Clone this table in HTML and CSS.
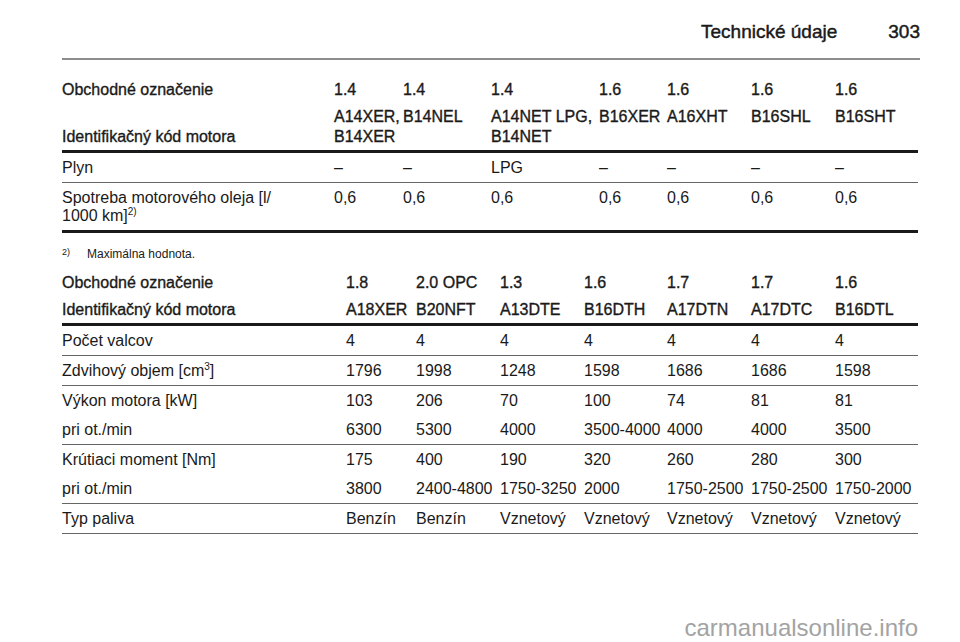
FILE: index.html
```html
<!DOCTYPE html>
<html lang="sk">
<head>
<meta charset="utf-8">
<title>Technické údaje 303</title>
<link rel="stylesheet" href="styles.css">
</head>
<body>
<div class="page">
  <header class="running-head">
    <span class="section">Technické údaje</span>
    <span class="pageno">303</span>
  </header>

  <table class="spec">
    <colgroup>
      <col class="w272"><col class="w69"><col class="w88"><col class="w108"><col class="w68"><col class="w84"><col class="w84"><col class="w83">
    </colgroup>
    <tr class="hd">
      <td>Obchodné označenie</td><td>1.4</td><td>1.4</td><td>1.4</td><td>1.6</td><td>1.6</td><td>1.6</td><td>1.6</td>
    </tr>
    <tr class="hd hd-last">
      <td class="bottom">Identifikačný kód motora</td><td>A14XER,<br>B14XER</td><td>B14NEL</td><td>A14NET LPG,<br>B14NET</td><td>B16XER</td><td>A16XHT</td><td>B16SHL</td><td>B16SHT</td>
    </tr>
    <tr class="thin">
      <td>Plyn</td><td>–</td><td>–</td><td>LPG</td><td>–</td><td>–</td><td>–</td><td>–</td>
    </tr>
    <tr class="thick">
      <td>Spotreba motorového oleja [l/<br>1000 km]<span class="sup">2)</span></td><td>0,6</td><td>0,6</td><td>0,6</td><td>0,6</td><td>0,6</td><td>0,6</td><td>0,6</td>
    </tr>
  </table>

  <p class="footnote"><span class="fn-mark">2)</span><span>Maximálna hodnota.</span></p>

  <table class="spec">
    <colgroup>
      <col class="w284"><col class="w70"><col class="w84"><col class="w84"><col class="w83"><col class="w84"><col class="w84"><col class="w83">
    </colgroup>
    <tr class="hd">
      <td>Obchodné označenie</td><td>1.8</td><td>2.0 OPC</td><td>1.3</td><td>1.6</td><td>1.7</td><td>1.7</td><td>1.6</td>
    </tr>
    <tr class="hd hd-last">
      <td>Identifikačný kód motora</td><td>A18XER</td><td>B20NFT</td><td>A13DTE</td><td>B16DTH</td><td>A17DTN</td><td>A17DTC</td><td>B16DTL</td>
    </tr>
    <tr class="thin">
      <td>Počet valcov</td><td>4</td><td>4</td><td>4</td><td>4</td><td>4</td><td>4</td><td>4</td>
    </tr>
    <tr class="thin">
      <td>Zdvihový objem [cm<span class="sup">3</span>]</td><td>1796</td><td>1998</td><td>1248</td><td>1598</td><td>1686</td><td>1686</td><td>1598</td>
    </tr>
    <tr>
      <td>Výkon motora [kW]</td><td>103</td><td>206</td><td>70</td><td>100</td><td>74</td><td>81</td><td>81</td>
    </tr>
    <tr class="thin">
      <td>pri ot./min</td><td>6300</td><td>5300</td><td>4000</td><td>3500-4000</td><td>4000</td><td>4000</td><td>3500</td>
    </tr>
    <tr>
      <td>Krútiaci moment [Nm]</td><td>175</td><td>400</td><td>190</td><td>320</td><td>260</td><td>280</td><td>300</td>
    </tr>
    <tr class="thin">
      <td>pri ot./min</td><td>3800</td><td>2400-4800</td><td>1750-3250</td><td>2000</td><td>1750-2500</td><td>1750-2500</td><td>1750-2000</td>
    </tr>
    <tr class="thin">
      <td>Typ paliva</td><td>Benzín</td><td>Benzín</td><td>Vznetový</td><td>Vznetový</td><td>Vznetový</td><td>Vznetový</td><td>Vznetový</td>
    </tr>
  </table>
</div>
<div class="watermark">carmanualsonline.info</div>
</body>
</html>
```

FILE: styles.css
```css
html, body {
  margin: 0;
  padding: 0;
  background: #ffffff;
}

body {
  position: relative;
  width: 960px;
  height: 642px;
  overflow: hidden;
  font-family: "Liberation Sans", Arial, sans-serif;
  color: #1a1a1a;
}

.page {
  margin-left: 62px;
  width: 856px;
  padding-top: 21px;
}

.running-head {
  display: flex;
  justify-content: flex-end;
  gap: 51px;
  margin-right: -2px;
  padding-bottom: 15px;
  border-bottom: 2px solid #8c8c8c;
  font-size: 19px;
  line-height: 22px;
  -webkit-text-stroke: 0.45px #1a1a1a;
}

.spec {
  width: 856px;
  margin-top: 16px;
  border-collapse: separate;
  border-spacing: 0;
  table-layout: fixed;
  font-size: 16px;
}

.w272 { width: 272px; }
.w284 { width: 284px; }
.w68 { width: 68px; }
.w69 { width: 69px; }
.w70 { width: 70px; }
.w83 { width: 83px; }
.w84 { width: 84px; }
.w88 { width: 88px; }
.w108 { width: 108px; }

.spec td {
  padding: 6px 0 5px;
  line-height: 18px;
  vertical-align: top;
  white-space: nowrap;
  text-align: left;
}

.spec tr.hd td {
  padding: 4px 0 3px;
  line-height: 20px;
  -webkit-text-stroke: 0.35px #1a1a1a;
}

.spec td.bottom {
  vertical-align: bottom;
}

.spec tr.hd-last td,
.spec tr.thick td {
  border-bottom: 3px solid #1a1a1a;
}

.spec tr.thin td {
  border-bottom: 1px solid #666666;
}

.sup {
  font-size: 10px;
  line-height: 0;
  vertical-align: 6px;
}

.footnote {
  display: flex;
  align-items: flex-start;
  margin: 14px 0 0;
  font-size: 12px;
  line-height: 14px;
}

.footnote + .spec {
  margin-top: 8px;
}

.fn-mark {
  width: 25px;
  font-size: 9px;
  line-height: 10px;
}

.watermark {
  position: absolute;
  right: 42px;
  bottom: 0;
  font-size: 24px;
  line-height: 28px;
  color: #a3a3a3;
}
```
